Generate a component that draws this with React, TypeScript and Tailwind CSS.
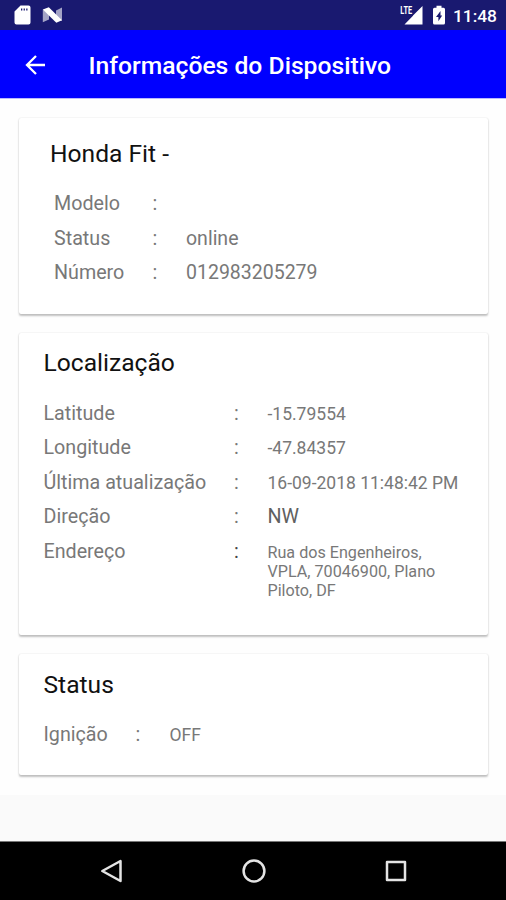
import type { ReactNode } from 'react';

interface InfoRowProps {
  label: string;
  columns: string;
  valueClass?: string;
  colonClass?: string;
  children?: ReactNode;
}

function InfoRow({ label, columns, valueClass = 'text-[19.5px]', colonClass = '', children }: InfoRowProps) {
  return (
    <div className={`grid h-[34.5px] items-baseline text-[19.7px] leading-[34.5px] text-[#787878] ${columns}`}>
      <span className="whitespace-nowrap">{label}</span>
      <span className={colonClass}>:</span>
      <span className={valueClass}>{children}</span>
    </div>
  );
}

interface CardProps {
  title: string;
  className: string;
  titleClass?: string;
  children: ReactNode;
}

function Card({ title, className, titleClass = '', children }: CardProps) {
  return (
    <section className={`mr-[18px] ml-[19px] rounded-[2px] bg-white shadow-[0_1.5px_2px_rgba(0,0,0,0.24),0_0_1.5px_rgba(0,0,0,0.1)] ${className}`}>
      <h2 className={`h-[33px] text-[24.6px] leading-[29px] text-[#111111] ${titleClass}`}>{title}</h2>
      {children}
    </section>
  );
}

function StatusBar() {
  return (
    <div className="flex h-[30px] items-center justify-between bg-[#191970] pr-[9px] pl-[14px] text-white">
      <div className="flex items-center gap-[11px]">
        <svg width="17" height="20" viewBox="0 0 17 20">
          <path fill="#fff" fillRule="evenodd" d="M6.5 0.5H14.5Q16.5 0.5 16.5 2.5V17.5Q16.5 19.5 14.5 19.5H2.5Q0.5 19.5 0.5 17.5V6.5ZM7 3.5V5.5H8.3V3.5ZM9.6 3.5V5.5H10.9V3.5ZM12.2 3.5V5.5H13.5V3.5Z" />
        </svg>
        <svg width="21" height="16" viewBox="0 0 21 16">
          <path fill="#fff" fillOpacity="0.6" d="M0.8 2.5L7 7V12.5L0.8 15.2ZM20 0.5V14L14 9.5V3.5Z" />
          <path fill="#fff" d="M0.8 2.5L6.8 0.3L20 13.2L14.3 15.7Z" />
        </svg>
      </div>
      <div className="flex items-center">
        <svg width="23" height="20" viewBox="0 0 23 20">
          <path fill="#fff" d="M22.5 1V19.5H4.5L13 10.7V10.5Z" />
          <text x="0.3" y="9.2" fontFamily="Roboto, sans-serif" fontSize="11" fontWeight="700" textLength="11.8" lengthAdjust="spacingAndGlyphs" fill="#fff">LTE</text>
        </svg>
        <svg className="ml-[8.5px]" width="14" height="20" viewBox="0 0 14 20">
          <path fill="#fff" fillRule="evenodd" d="M4.5 0.7H9.5V2.7H11.5Q13 2.7 13 4.2V18Q13 19.5 11.5 19.5H2.5Q1 19.5 1 18V4.2Q1 2.7 2.5 2.7H4.5ZM8.5 6L4 12H6.4V16.2L10.2 10.4H8.5Z" />
        </svg>
        <span className="ml-[7px] pt-[2px] text-[17.4px] leading-5 font-medium">11:48</span>
      </div>
    </div>
  );
}

function NavBar() {
  return (
    <div className="flex h-[59px] items-center border-t border-[#777777] bg-black pr-[39px] pl-[41px] text-[#e4e4e4]">
      <div className="grid w-full grid-cols-3 place-items-center">
        <svg className="mr-[2px]" width="24" height="26" viewBox="0 0 24 26" fill="none" stroke="currentColor" strokeWidth="2.5" strokeLinejoin="round">
          <path d="M21.5 3V23L3.3 13Z" />
        </svg>
        <svg width="26" height="26" viewBox="0 0 26 26" fill="none" stroke="currentColor" strokeWidth="2.5">
          <circle cx="13" cy="13" r="10.4" />
        </svg>
        <svg width="24" height="24" viewBox="0 0 24 24" fill="none" stroke="currentColor" strokeWidth="2.5" strokeLinejoin="round">
          <rect x="3" y="3" width="18" height="18" />
        </svg>
      </div>
    </div>
  );
}

export default function App() {
  const deviceCols = 'grid-cols-[98.5px_33.5px_1fr]';
  const locationCols = 'grid-cols-[190.5px_33.5px_1fr]';
  const statusCols = 'grid-cols-[92px_34px_1fr]';
  const small = 'text-[17.5px]';

  return (
    <div className="flex h-[900px] w-[506px] flex-col overflow-hidden bg-[#fafafa] font-['Roboto',sans-serif]">
      <StatusBar />

      <header className="flex h-[69px] items-center border-b border-[#b8b8ff] bg-[#0000ff] pl-[24px] text-white">
        <svg className="mt-[1px]" width="22" height="22" viewBox="0 0 22 22" fill="none" stroke="currentColor" strokeWidth="2.3">
          <path d="M21 11H3M12 2L3 11L12 20" />
        </svg>
        <h1 className="ml-[42.5px] pt-[3px] text-[24.7px] leading-8 font-medium">Informações do Dispositivo</h1>
      </header>

      <main className="h-[696px] bg-[#fefefe] pt-[18.5px]">
        <Card title="Honda Fit -" className="h-[196.5px] pt-[21.5px] pr-4 pl-[35px]" titleClass="-ml-[4px]">
          <div className="pt-[15px]">
            <InfoRow label="Modelo" columns={deviceCols} />
            <InfoRow label="Status" columns={deviceCols}>online</InfoRow>
            <InfoRow label="Número" columns={deviceCols}>012983205279</InfoRow>
          </div>
        </Card>

        <Card title="Localização" className="mt-[18.5px] h-[302.5px] pt-[15.5px] pr-4 pl-[24.5px]">
          <div className="pt-[15.5px]">
            <InfoRow label="Latitude" columns={locationCols} valueClass={small}>-15.79554</InfoRow>
            <InfoRow label="Longitude" columns={locationCols} valueClass={small}>-47.84357</InfoRow>
            <InfoRow label="Última atualização" columns={locationCols} valueClass={small}>16-09-2018 11:48:42 PM</InfoRow>
            <InfoRow label="Direção" columns={locationCols} valueClass="text-[19.7px] text-[#606060]">NW</InfoRow>
            <InfoRow label="Endereço" columns={locationCols} colonClass="text-[#444444]" valueClass="w-[180px] text-[16.15px] leading-[19px]">
              Rua dos Engenheiros, VPLA, 70046900, Plano Piloto, DF
            </InfoRow>
          </div>
        </Card>

        <Card title="Status" className="mt-[19px] h-[120.5px] pt-[15.5px] pr-4 pl-[24.5px]">
          <div className="pt-[15.5px]">
            <InfoRow label="Ignição" columns={statusCols} valueClass={small}>OFF</InfoRow>
          </div>
        </Card>
      </main>

      <div className="h-[46px] bg-[#fafafa]" />
      <NavBar />
    </div>
  );
}
